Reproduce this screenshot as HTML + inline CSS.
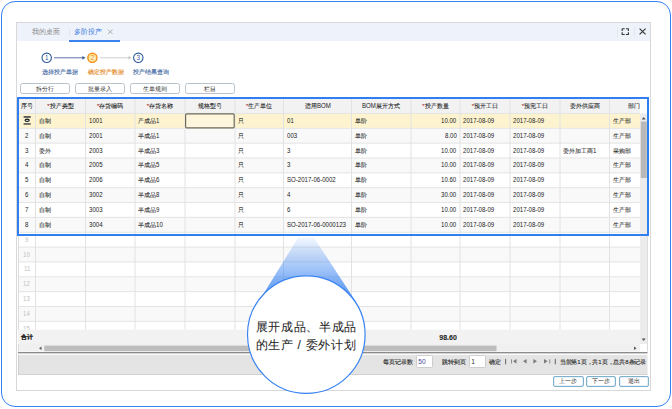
<!DOCTYPE html>
<html><head><meta charset="utf-8">
<style>
*{margin:0;padding:0;box-sizing:border-box}
html,body{width:672px;height:409px;overflow:hidden;background:#fff;font-family:"Liberation Sans",sans-serif;color:#333}
.a{position:absolute}
#outer{left:1px;top:1px;width:670px;height:406px;border:1px solid #3282f6;border-radius:14px}
#win{left:16px;top:22px;width:635px;height:369px;border:1px solid #d8d8d8;background:#fff}
#tabbar{left:17px;top:23px;width:633px;height:18px;background:#eef3fb}
.tab{font-size:7px;line-height:7px;white-space:nowrap}
.step{font-size:6px;line-height:6px;white-space:nowrap;-webkit-text-stroke:0.15px currentColor}
.btn{height:11px;border:1px solid #b9c3cd;border-radius:2.5px;background:#fff;font-size:6px;line-height:10.2px;text-align:center;color:#333}
.cell{position:absolute;font-size:6px;line-height:6px;white-space:nowrap;color:#222;-webkit-text-stroke:0.06px currentColor}
.red{color:#e53935}
.L{display:inline-block;font-size:7px;transform:scaleX(.87);transform-origin:0 50%;-webkit-text-stroke:0}
.pg{font-size:6px;line-height:6px;white-space:nowrap;color:#333;-webkit-text-stroke:0.15px currentColor}
.ibox{height:13px;border:1px solid #cdcdcd;border-radius:1.5px;background:#fff;font-size:6.6px;line-height:11px;padding-left:1.3px;color:#4a4aa0}
.nbtn{height:10.6px;border:1px solid #7db1ce;border-radius:2px;background:#fff;box-shadow:inset 0 0 0 0.3px #a9cbe0;font-size:6px;line-height:9px;text-align:center;color:#333}
</style></head><body>
<div id="outer" class="a"></div>
<div id="win" class="a"></div>
<div id="tabbar" class="a"></div>
<div class="a tab" style="left:32px;top:28.3px;color:#8a8a8a">我的桌面</div>
<div class="a" style="left:69px;top:28.5px;width:1px;height:7px;background:#e2e6ec"></div>
<div class="a tab" style="left:74.4px;top:28.3px;color:#3678dc">多阶投产</div>
<div class="a" style="left:69px;top:40px;width:50.5px;height:2px;background:#3b82f0"></div>
<svg class="a" style="left:0;top:0" width="672" height="70" viewBox="0 0 672 70">
 <path d="M108 29.5l4.6 4.6M112.6 29.5l-4.6 4.6" stroke="#9a9a9a" stroke-width="0.8" fill="none"/>
 <line x1="617.5" y1="26.5" x2="617.5" y2="37.5" stroke="#e4e8ee" stroke-width="1"/>
 <line x1="634.5" y1="26.5" x2="634.5" y2="37.5" stroke="#e4e8ee" stroke-width="1"/>
 <path d="M622.2 30.9V28.7H624.7M625.9 28.7H628.4V30.9M628.4 32.3V34.5H625.9M624.7 34.5H622.2V32.3" fill="none" stroke="#3a3a3a" stroke-width="1.15" stroke-linejoin="round"/>
 <path d="M639.6 28.6l6 5.8M645.6 28.6l-6 5.8" stroke="#333" stroke-width="1.15" fill="none"/>
 <circle cx="46.7" cy="57.8" r="4.7" fill="#fff" stroke="#2f5b9a" stroke-width="1.1"/>
 <text x="46.7" y="60.1" font-size="6.3" text-anchor="middle" fill="#2f5b9a" font-family="Liberation Sans">1</text>
 <line x1="54" y1="57.8" x2="83.5" y2="57.8" stroke="#5a76a6" stroke-width="1"/>
 <path d="M82.3 55.9L85.5 57.8L82.3 59.7z" fill="#3d5f95"/>
 <defs><radialGradient id="og" cx="0.5" cy="0.55" r="0.55"><stop offset="0" stop-color="#fffbe6"/><stop offset="0.6" stop-color="#ffe9a0"/><stop offset="1" stop-color="#ffc94a"/></radialGradient></defs><circle cx="92.4" cy="57.7" r="4.6" fill="url(#og)" stroke="#f08a1c" stroke-width="1.3"/>
 <text x="92.4" y="60" font-size="6.3" text-anchor="middle" fill="#e8891e" font-family="Liberation Sans">2</text>
 <line x1="100" y1="57.8" x2="129.5" y2="57.8" stroke="#cfcfcf" stroke-width="1"/>
 <path d="M128.5 56L131.5 57.8L128.5 59.6z" fill="#c4c4c4"/>
 <circle cx="138.3" cy="57.8" r="4.7" fill="#fff" stroke="#2f5b9a" stroke-width="1.1"/>
 <text x="138.3" y="60.1" font-size="6.3" text-anchor="middle" fill="#2f5b9a" font-family="Liberation Sans">3</text>
</svg>
<div class="a step" style="left:42px;top:69px;color:#4b6fa8">选择投产单据</div>
<div class="a step" style="left:88px;top:69px;color:#e48a25">确定投产数据</div>
<div class="a step" style="left:133px;top:69px;color:#4b6fa8">投产结果查询</div>

<div class="a btn" style="left:20px;top:82.8px;width:50px">拆分行</div>
<div class="a btn" style="left:75.3px;top:82.8px;width:50px">批量录入</div>
<div class="a btn" style="left:130.3px;top:82.8px;width:50px">生单规则</div>
<div class="a btn" style="left:185.2px;top:82.8px;width:50.3px">栏目</div>
<svg class="a" style="left:0;top:0" width="672" height="409" viewBox="0 0 672 409"><rect x="17.5" y="98" width="630.0" height="253.5" fill="#fff"/><rect x="18" y="99" width="622" height="14.450000000000003" fill="#f2f2f3"/><rect x="18" y="113.45" width="622" height="14.85" fill="#fdf4cf"/><rect x="18" y="128.30" width="622" height="14.85" fill="#f9f9f9"/><rect x="18" y="143.15" width="622" height="14.85" fill="#ffffff"/><rect x="18" y="158.00" width="622" height="14.85" fill="#f9f9f9"/><rect x="18" y="172.85" width="622" height="14.85" fill="#ffffff"/><rect x="18" y="187.70" width="622" height="14.85" fill="#f9f9f9"/><rect x="18" y="202.55" width="622" height="14.85" fill="#ffffff"/><rect x="18" y="217.40" width="622" height="14.85" fill="#f9f9f9"/><rect x="18" y="232.25" width="622" height="14.85" fill="#ffffff"/><rect x="18" y="247.10" width="622" height="14.85" fill="#f9f9f9"/><rect x="18" y="261.95" width="622" height="14.85" fill="#ffffff"/><rect x="18" y="276.80" width="622" height="14.85" fill="#f9f9f9"/><rect x="18" y="291.65" width="622" height="14.85" fill="#ffffff"/><rect x="18" y="306.50" width="622" height="14.85" fill="#f9f9f9"/><rect x="18" y="321.35" width="622" height="8.45" fill="#ffffff"/><line x1="18" y1="113.45" x2="640" y2="113.45" stroke="#e4e4e4" stroke-width="1"/><line x1="18" y1="128.30" x2="640" y2="128.30" stroke="#e4e4e4" stroke-width="1"/><line x1="18" y1="143.15" x2="640" y2="143.15" stroke="#e4e4e4" stroke-width="1"/><line x1="18" y1="158.00" x2="640" y2="158.00" stroke="#e4e4e4" stroke-width="1"/><line x1="18" y1="172.85" x2="640" y2="172.85" stroke="#e4e4e4" stroke-width="1"/><line x1="18" y1="187.70" x2="640" y2="187.70" stroke="#e4e4e4" stroke-width="1"/><line x1="18" y1="202.55" x2="640" y2="202.55" stroke="#e4e4e4" stroke-width="1"/><line x1="18" y1="217.40" x2="640" y2="217.40" stroke="#e4e4e4" stroke-width="1"/><line x1="18" y1="232.25" x2="640" y2="232.25" stroke="#e4e4e4" stroke-width="1"/><line x1="18" y1="247.10" x2="640" y2="247.10" stroke="#e4e4e4" stroke-width="1"/><line x1="18" y1="261.95" x2="640" y2="261.95" stroke="#e4e4e4" stroke-width="1"/><line x1="18" y1="276.80" x2="640" y2="276.80" stroke="#e4e4e4" stroke-width="1"/><line x1="18" y1="291.65" x2="640" y2="291.65" stroke="#e4e4e4" stroke-width="1"/><line x1="18" y1="306.50" x2="640" y2="306.50" stroke="#e4e4e4" stroke-width="1"/><line x1="18" y1="321.35" x2="640" y2="321.35" stroke="#e4e4e4" stroke-width="1"/><line x1="35.5" y1="99" x2="35.5" y2="329.8" stroke="#e2e2e2" stroke-width="1"/><line x1="85.5" y1="99" x2="85.5" y2="329.8" stroke="#e2e2e2" stroke-width="1"/><line x1="135" y1="99" x2="135" y2="329.8" stroke="#e2e2e2" stroke-width="1"/><line x1="185" y1="99" x2="185" y2="329.8" stroke="#e2e2e2" stroke-width="1"/><line x1="235" y1="99" x2="235" y2="329.8" stroke="#e2e2e2" stroke-width="1"/><line x1="283.5" y1="99" x2="283.5" y2="329.8" stroke="#e2e2e2" stroke-width="1"/><line x1="351.5" y1="99" x2="351.5" y2="329.8" stroke="#e2e2e2" stroke-width="1"/><line x1="411" y1="99" x2="411" y2="329.8" stroke="#e2e2e2" stroke-width="1"/><line x1="460" y1="99" x2="460" y2="329.8" stroke="#e2e2e2" stroke-width="1"/><line x1="510" y1="99" x2="510" y2="329.8" stroke="#e2e2e2" stroke-width="1"/><line x1="560" y1="99" x2="560" y2="329.8" stroke="#e2e2e2" stroke-width="1"/><line x1="609.5" y1="99" x2="609.5" y2="329.8" stroke="#e2e2e2" stroke-width="1"/><rect x="18" y="329.8" width="622" height="14.199999999999989" fill="#f2f2f2"/><rect x="18" y="344" width="622" height="7.5" fill="#f0f0f0"/><rect x="44.3" y="345.6" width="452.2" height="5.6" fill="#bdbdbd"/><path d="M41.5 346.5L39 348.3L41.5 350z" fill="#555"/><path d="M634 346.5L636.5 348.3L634 350z" fill="#555"/><rect x="640" y="113.45" width="7.5" height="230.55" fill="#ececec"/><rect x="640.8" y="121.5" width="6" height="56.5" fill="#b9b9b9"/><path d="M641.7 119.5L643.7 117L645.7 119.5z" fill="#555"/><path d="M641.7 338.5L643.7 341L645.7 338.5z" fill="#555"/><line x1="647.5" y1="99" x2="647.5" y2="351.5" stroke="#dcdcdc" stroke-width="1"/><line x1="18.5" y1="99" x2="18.5" y2="351.5" stroke="#dcdcdc" stroke-width="1"/><rect x="18" y="352" width="629.5" height="1.6" fill="#8c8c8c"/><rect x="18" y="353.6" width="629.5" height="1.4" fill="#fafafa"/><rect x="18" y="355" width="629.5" height="19.5" fill="#e4e4e4"/><line x1="18" y1="374.5" x2="647.5" y2="374.5" stroke="#d2d2d2" stroke-width="1"/><line x1="18.5" y1="355" x2="18.5" y2="375" stroke="#cfcfcf" stroke-width="1"/><rect x="185.6" y="113.9" width="48.6" height="14" rx="1.2" fill="#fdf6dc" stroke="#6e6a5a" stroke-width="1.2"/><rect x="23.6" y="116.1" width="7.1" height="1.7" fill="#4a4a4a"/><ellipse cx="27.15" cy="120.3" rx="2.1" ry="1.2" fill="#cfe3ef" stroke="#111" stroke-width="1.1"/><rect x="23.6" y="123.2" width="7.1" height="1.5" fill="#4a4a4a"/></svg>
<div class="cell" style="left:18px;top:102.6px;width:17.5px;text-align:center;color:#222;-webkit-text-stroke:0.08px #222">序号</div>
<div class="cell" style="left:35.5px;top:102.6px;width:50.0px;text-align:center;color:#222;-webkit-text-stroke:0.08px #222"><span class="red">*</span>投产类型</div>
<div class="cell" style="left:85.5px;top:102.6px;width:49.5px;text-align:center;color:#222;-webkit-text-stroke:0.08px #222"><span class="red">*</span>存货编码</div>
<div class="cell" style="left:135px;top:102.6px;width:50px;text-align:center;color:#222;-webkit-text-stroke:0.08px #222"><span class="red">*</span>存货名称</div>
<div class="cell" style="left:185px;top:102.6px;width:50px;text-align:center;color:#222;-webkit-text-stroke:0.08px #222">规格型号</div>
<div class="cell" style="left:235px;top:102.6px;width:48.5px;text-align:center;color:#222;-webkit-text-stroke:0.08px #222"><span class="red">*</span>生产单位</div>
<div class="cell" style="left:283.5px;top:102.6px;width:68.0px;text-align:center;color:#222;-webkit-text-stroke:0.08px #222">适用<span class="L" style="margin-right:-2.07px">BOM</span></div>
<div class="cell" style="left:351.5px;top:102.6px;width:59.5px;text-align:center;color:#222;-webkit-text-stroke:0.08px #222"><span class="L" style="margin-right:-2.07px">BOM</span>展开方式</div>
<div class="cell" style="left:411px;top:102.6px;width:49px;text-align:center;color:#222;-webkit-text-stroke:0.08px #222"><span class="red">*</span>投产数量</div>
<div class="cell" style="left:460px;top:102.6px;width:50px;text-align:center;color:#222;-webkit-text-stroke:0.08px #222"><span class="red">*</span>预开工日</div>
<div class="cell" style="left:510px;top:102.6px;width:50px;text-align:center;color:#222;-webkit-text-stroke:0.08px #222"><span class="red">*</span>预完工日</div>
<div class="cell" style="left:560px;top:102.6px;width:49.5px;text-align:center;color:#222;-webkit-text-stroke:0.08px #222">委外供应商</div>
<div class="cell" style="left:609.5px;top:102.6px;width:48.0px;text-align:center;color:#222;-webkit-text-stroke:0.08px #222">部门</div>
<div class="cell" style="left:38.5px;top:117.9px;">自制</div>
<div class="cell" style="left:88.5px;top:117.9px;"><span class="L" style="margin-right:-2.02px">1001</span></div>
<div class="cell" style="left:138.0px;top:117.9px;">产成品<span class="L" style="margin-right:-0.51px">1</span></div>
<div class="cell" style="left:238.0px;top:117.9px;">只</div>
<div class="cell" style="left:286.5px;top:117.9px;"><span class="L" style="margin-right:-1.01px">01</span></div>
<div class="cell" style="left:354.5px;top:117.9px;">单阶</div>
<div class="cell" style="left:411px;top:117.9px;width:45.5px;text-align:right"><span class="L" style="margin-right:-2.28px">10.00</span></div>
<div class="cell" style="left:463.0px;top:117.9px;"><span class="L" style="margin-right:-4.65px">2017-08-09</span></div>
<div class="cell" style="left:513.0px;top:117.9px;"><span class="L" style="margin-right:-4.65px">2017-08-09</span></div>
<div class="cell" style="left:612.5px;top:117.9px;">生产部</div>
<div class="cell" style="left:18px;top:132.7px;width:17.5px;text-align:center"><span class="L" style="margin-right:-0.51px">2</span></div>
<div class="cell" style="left:38.5px;top:132.7px;">自制</div>
<div class="cell" style="left:88.5px;top:132.7px;"><span class="L" style="margin-right:-2.02px">2001</span></div>
<div class="cell" style="left:138.0px;top:132.7px;">半成品<span class="L" style="margin-right:-0.51px">1</span></div>
<div class="cell" style="left:238.0px;top:132.7px;">只</div>
<div class="cell" style="left:286.5px;top:132.7px;"><span class="L" style="margin-right:-1.52px">003</span></div>
<div class="cell" style="left:354.5px;top:132.7px;">单阶</div>
<div class="cell" style="left:411px;top:132.7px;width:45.5px;text-align:right"><span class="L" style="margin-right:-1.77px">8.00</span></div>
<div class="cell" style="left:463.0px;top:132.7px;"><span class="L" style="margin-right:-4.65px">2017-08-09</span></div>
<div class="cell" style="left:513.0px;top:132.7px;"><span class="L" style="margin-right:-4.65px">2017-08-09</span></div>
<div class="cell" style="left:612.5px;top:132.7px;">生产部</div>
<div class="cell" style="left:18px;top:147.6px;width:17.5px;text-align:center"><span class="L" style="margin-right:-0.51px">3</span></div>
<div class="cell" style="left:38.5px;top:147.6px;">委外</div>
<div class="cell" style="left:88.5px;top:147.6px;"><span class="L" style="margin-right:-2.02px">2003</span></div>
<div class="cell" style="left:138.0px;top:147.6px;">半成品<span class="L" style="margin-right:-0.51px">3</span></div>
<div class="cell" style="left:238.0px;top:147.6px;">只</div>
<div class="cell" style="left:286.5px;top:147.6px;"><span class="L" style="margin-right:-0.51px">3</span></div>
<div class="cell" style="left:354.5px;top:147.6px;">单阶</div>
<div class="cell" style="left:411px;top:147.6px;width:45.5px;text-align:right"><span class="L" style="margin-right:-2.28px">10.00</span></div>
<div class="cell" style="left:463.0px;top:147.6px;"><span class="L" style="margin-right:-4.65px">2017-08-09</span></div>
<div class="cell" style="left:513.0px;top:147.6px;"><span class="L" style="margin-right:-4.65px">2017-08-09</span></div>
<div class="cell" style="left:563.0px;top:147.6px;">委外加工商<span class="L" style="margin-right:-0.51px">1</span></div>
<div class="cell" style="left:612.5px;top:147.6px;">采购部</div>
<div class="cell" style="left:18px;top:162.4px;width:17.5px;text-align:center"><span class="L" style="margin-right:-0.51px">4</span></div>
<div class="cell" style="left:38.5px;top:162.4px;">自制</div>
<div class="cell" style="left:88.5px;top:162.4px;"><span class="L" style="margin-right:-2.02px">2005</span></div>
<div class="cell" style="left:138.0px;top:162.4px;">半成品<span class="L" style="margin-right:-0.51px">5</span></div>
<div class="cell" style="left:238.0px;top:162.4px;">只</div>
<div class="cell" style="left:286.5px;top:162.4px;"><span class="L" style="margin-right:-0.51px">3</span></div>
<div class="cell" style="left:354.5px;top:162.4px;">单阶</div>
<div class="cell" style="left:411px;top:162.4px;width:45.5px;text-align:right"><span class="L" style="margin-right:-2.28px">10.00</span></div>
<div class="cell" style="left:463.0px;top:162.4px;"><span class="L" style="margin-right:-4.65px">2017-08-09</span></div>
<div class="cell" style="left:513.0px;top:162.4px;"><span class="L" style="margin-right:-4.65px">2017-08-09</span></div>
<div class="cell" style="left:612.5px;top:162.4px;">生产部</div>
<div class="cell" style="left:18px;top:177.2px;width:17.5px;text-align:center"><span class="L" style="margin-right:-0.51px">5</span></div>
<div class="cell" style="left:38.5px;top:177.2px;">自制</div>
<div class="cell" style="left:88.5px;top:177.2px;"><span class="L" style="margin-right:-2.02px">2006</span></div>
<div class="cell" style="left:138.0px;top:177.2px;">半成品<span class="L" style="margin-right:-0.51px">6</span></div>
<div class="cell" style="left:238.0px;top:177.2px;">只</div>
<div class="cell" style="left:286.5px;top:177.2px;"><span class="L" style="margin-right:-7.28px">SO-2017-06-0002</span></div>
<div class="cell" style="left:354.5px;top:177.2px;">单阶</div>
<div class="cell" style="left:411px;top:177.2px;width:45.5px;text-align:right"><span class="L" style="margin-right:-2.28px">10.60</span></div>
<div class="cell" style="left:463.0px;top:177.2px;"><span class="L" style="margin-right:-4.65px">2017-08-09</span></div>
<div class="cell" style="left:513.0px;top:177.2px;"><span class="L" style="margin-right:-4.65px">2017-08-09</span></div>
<div class="cell" style="left:612.5px;top:177.2px;">生产部</div>
<div class="cell" style="left:18px;top:192.1px;width:17.5px;text-align:center"><span class="L" style="margin-right:-0.51px">6</span></div>
<div class="cell" style="left:38.5px;top:192.1px;">自制</div>
<div class="cell" style="left:88.5px;top:192.1px;"><span class="L" style="margin-right:-2.02px">3002</span></div>
<div class="cell" style="left:138.0px;top:192.1px;">半成品<span class="L" style="margin-right:-0.51px">8</span></div>
<div class="cell" style="left:238.0px;top:192.1px;">只</div>
<div class="cell" style="left:286.5px;top:192.1px;"><span class="L" style="margin-right:-0.51px">4</span></div>
<div class="cell" style="left:354.5px;top:192.1px;">单阶</div>
<div class="cell" style="left:411px;top:192.1px;width:45.5px;text-align:right"><span class="L" style="margin-right:-2.28px">30.00</span></div>
<div class="cell" style="left:463.0px;top:192.1px;"><span class="L" style="margin-right:-4.65px">2017-08-09</span></div>
<div class="cell" style="left:513.0px;top:192.1px;"><span class="L" style="margin-right:-4.65px">2017-08-09</span></div>
<div class="cell" style="left:612.5px;top:192.1px;">生产部</div>
<div class="cell" style="left:18px;top:207.0px;width:17.5px;text-align:center"><span class="L" style="margin-right:-0.51px">7</span></div>
<div class="cell" style="left:38.5px;top:207.0px;">自制</div>
<div class="cell" style="left:88.5px;top:207.0px;"><span class="L" style="margin-right:-2.02px">3003</span></div>
<div class="cell" style="left:138.0px;top:207.0px;">半成品<span class="L" style="margin-right:-0.51px">9</span></div>
<div class="cell" style="left:238.0px;top:207.0px;">只</div>
<div class="cell" style="left:286.5px;top:207.0px;"><span class="L" style="margin-right:-0.51px">6</span></div>
<div class="cell" style="left:354.5px;top:207.0px;">单阶</div>
<div class="cell" style="left:411px;top:207.0px;width:45.5px;text-align:right"><span class="L" style="margin-right:-2.28px">10.00</span></div>
<div class="cell" style="left:463.0px;top:207.0px;"><span class="L" style="margin-right:-4.65px">2017-08-09</span></div>
<div class="cell" style="left:513.0px;top:207.0px;"><span class="L" style="margin-right:-4.65px">2017-08-09</span></div>
<div class="cell" style="left:612.5px;top:207.0px;">生产部</div>
<div class="cell" style="left:18px;top:221.8px;width:17.5px;text-align:center"><span class="L" style="margin-right:-0.51px">8</span></div>
<div class="cell" style="left:38.5px;top:221.8px;">自制</div>
<div class="cell" style="left:88.5px;top:221.8px;"><span class="L" style="margin-right:-2.02px">3004</span></div>
<div class="cell" style="left:138.0px;top:221.8px;">半成品<span class="L" style="margin-right:-1.01px">10</span></div>
<div class="cell" style="left:238.0px;top:221.8px;">只</div>
<div class="cell" style="left:286.5px;top:221.8px;"><span class="L" style="margin-right:-8.80px">SO-2017-06-0000123</span></div>
<div class="cell" style="left:354.5px;top:221.8px;">单阶</div>
<div class="cell" style="left:411px;top:221.8px;width:45.5px;text-align:right"><span class="L" style="margin-right:-2.28px">10.00</span></div>
<div class="cell" style="left:463.0px;top:221.8px;"><span class="L" style="margin-right:-4.65px">2017-08-09</span></div>
<div class="cell" style="left:513.0px;top:221.8px;"><span class="L" style="margin-right:-4.65px">2017-08-09</span></div>
<div class="cell" style="left:612.5px;top:221.8px;">生产部</div>
<div class="cell" style="left:18px;top:236.7px;width:17.5px;text-align:center;color:#c0c0c0"><span class="L" style="margin-right:-0.51px">9</span></div>
<div class="cell" style="left:18px;top:251.5px;width:17.5px;text-align:center;color:#c0c0c0"><span class="L" style="margin-right:-1.01px">10</span></div>
<div class="cell" style="left:18px;top:266.3px;width:17.5px;text-align:center;color:#c0c0c0"><span class="L" style="margin-right:-0.94px">11</span></div>
<div class="cell" style="left:18px;top:281.2px;width:17.5px;text-align:center;color:#c0c0c0"><span class="L" style="margin-right:-1.01px">12</span></div>
<div class="cell" style="left:18px;top:296.0px;width:17.5px;text-align:center;color:#c0c0c0"><span class="L" style="margin-right:-1.01px">13</span></div>
<div class="cell" style="left:18px;top:310.9px;width:17.5px;text-align:center;color:#c0c0c0"><span class="L" style="margin-right:-1.01px">14</span></div>
<div class="cell" style="left:18px;top:325.8px;width:17.5px;text-align:center;color:#c0c0c0"><span class="L" style="margin-right:-1.01px">15</span></div>
<svg class="a" style="left:0;top:0" width="672" height="409"><rect x="18" y="329.8" width="622" height="14.199999999999989" fill="#f2f2f2"/></svg>
<div class="cell" style="left:20.5px;top:334.2px;font-weight:bold;color:#222">合计</div>
<div class="cell" style="left:411px;top:335.0px;width:45.8px;text-align:right;font-weight:bold;color:#222;font-size:7px">98.60</div>
<div class="a" style="left:17px;top:97px;width:632px;height:138.5px;border:2px solid #2f7ff2"></div>
<div class="a pg" style="left:383px;top:359px">每页记录数</div>
<div class="a ibox" style="left:416px;top:355.3px;width:17.2px">50</div>
<div class="a pg" style="left:441.5px;top:359px">跳转到页</div>
<div class="a ibox" style="left:469px;top:355.3px;width:17px;color:#333">1</div>
<div class="a pg" style="left:488.5px;top:359px">确定</div>
<svg class="a" style="left:500px;top:355px" width="62" height="13" viewBox="0 0 62 13"><rect x="5.2" y="3.9" width="0.9" height="5.4" fill="#555"/><rect x="11.2" y="4.3" width="0.8" height="4.2" fill="#777"/><path d="M16.5 4.1L12.9 6.3L16.5 8.6z" fill="#7a7a7a"/><path d="M26.6 4.1L23 6.3L26.6 8.6z" fill="#7a7a7a"/><path d="M33.4 4.1L37 6.3L33.4 8.6z" fill="#7a7a7a"/><path d="M44 4.1L47.6 6.3L44 8.6z" fill="#7a7a7a"/><rect x="49.4" y="4.3" width="0.8" height="4.2" fill="#777"/><rect x="54.8" y="3.9" width="0.9" height="5.4" fill="#555"/></svg>
<div class="a pg" style="left:559.6px;top:359px;letter-spacing:-0.08px">当前第1页，共1页，总共8条记录</div>
<div class="a nbtn" style="left:553px;top:376.2px;width:30.5px">上一步</div>
<div class="a nbtn" style="left:586.3px;top:376.2px;width:30px">下一步</div>
<div class="a nbtn" style="left:618.5px;top:376.2px;width:30px">退出</div>
<svg class="a" style="left:0;top:0" width="672" height="409" viewBox="0 0 672 409">
<defs><linearGradient id="cg" gradientUnits="userSpaceOnUse" x1="0" y1="237" x2="0" y2="303">
<stop offset="0" stop-color="#3d86f2" stop-opacity="0.06"/><stop offset="1" stop-color="#3d86f2" stop-opacity="0.95"/></linearGradient></defs>
<path d="M298.2 237.4L313.8 237.4L356.1 301.9L257 304.4z" fill="url(#cg)"/>
<circle cx="306.3" cy="334.6" r="58.8" fill="#fff" stroke="#3a84f2" stroke-width="1.2"/>
</svg>
<div class="a" style="left:255.5px;top:317.7px;font-size:12px;line-height:18px;letter-spacing:0.68px;color:#1e1e1e;-webkit-text-stroke:0.05px #1e1e1e;white-space:nowrap">展开成品、半成品<br>的生产 / 委外计划</div>

</body></html>
